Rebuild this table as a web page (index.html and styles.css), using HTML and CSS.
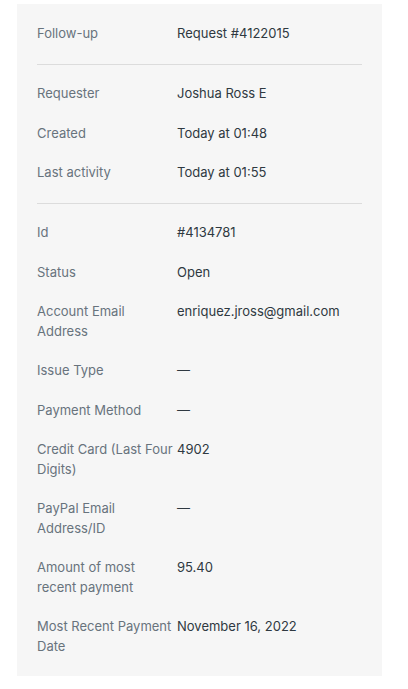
FILE: index.html
```html
<!DOCTYPE html>
<html>
<head>
<meta charset="utf-8">
<link rel="stylesheet" href="styles.css">
</head>
<body>
<div class="panel">
  <dl class="section">
    <div class="row"><dt class="label">Follow-up</dt><dd class="value">Request #4122015</dd></div>
  </dl>
  <hr class="divider">
  <dl class="section">
    <div class="row"><dt class="label">Requester</dt><dd class="value">Joshua Ross E</dd></div>
    <div class="row"><dt class="label">Created</dt><dd class="value">Today at 01:48</dd></div>
    <div class="row"><dt class="label">Last activity</dt><dd class="value">Today at 01:55</dd></div>
  </dl>
  <hr class="divider">
  <dl class="section">
    <div class="row"><dt class="label">Id</dt><dd class="value">#4134781</dd></div>
    <div class="row"><dt class="label">Status</dt><dd class="value">Open</dd></div>
    <div class="row"><dt class="label">Account Email Address</dt><dd class="value">enriquez.jross@gmail.com</dd></div>
    <div class="row"><dt class="label">Issue Type</dt><dd class="value">—</dd></div>
    <div class="row"><dt class="label">Payment Method</dt><dd class="value">—</dd></div>
    <div class="row"><dt class="label">Credit Card (Last Four Digits)</dt><dd class="value">4902</dd></div>
    <div class="row"><dt class="label">PayPal Email Address/ID</dt><dd class="value">—</dd></div>
    <div class="row"><dt class="label">Amount of most recent payment</dt><dd class="value">95.40</dd></div>
    <div class="row"><dt class="label">Most Recent Payment Date</dt><dd class="value">November 16, 2022</dd></div>
  </dl>
</div>
</body>
</html>
```

FILE: styles.css
```css
html, body {
  margin: 0;
  padding: 0;
  background: #ffffff;
}
body {
  padding: 4px 0 0 17px;
  font-family: Inter, "Noto Sans", sans-serif;
  font-size: 13px;
  line-height: 19.5px;
}
.panel {
  width: 365px;
  box-sizing: border-box;
  background: #f6f6f6;
  padding: 20px 20px 20px 20px;
}
.section {
  margin: 0;
  display: flex;
  flex-direction: column;
  gap: 20px;
}
.row {
  display: flex;
}
.label {
  width: 140px;
  padding-right: 2px;
  box-sizing: border-box;
  color: #68737d;
  flex-shrink: 0;
}
.value {
  margin: 0;
  color: #2f3941;
}
.divider {
  border: 0;
  border-top: 1px solid #dcdcdc;
  margin: 20px 0 19.5px 0;
}
```
